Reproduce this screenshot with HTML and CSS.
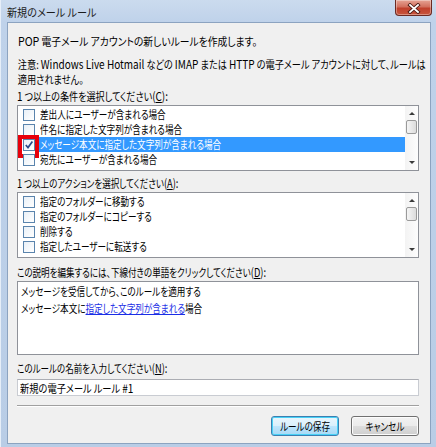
FILE: index.html
```html
<!DOCTYPE html>
<html lang="ja">
<head>
<meta charset="utf-8">
<title>新規のメール ルール</title>
<link rel="stylesheet" href="styles.css">
</head>
<body>
<div class="window">
  <div class="titlebar">
    <span class="title">新規のメール ルール</span>
    <div class="close">
      <svg width="14" height="11" viewBox="0 0 14 11"><path d="M3 2 L11 9 M11 2 L3 9" stroke="#4a1a14" stroke-width="3.6" stroke-linecap="square"/><path d="M3 2 L11 9 M11 2 L3 9" stroke="#ffffff" stroke-width="1.8" stroke-linecap="square"/></svg>
    </div>
  </div>
  <div class="client">
    <p class="intro"><span class="en">POP</span> 電子メール アカウントの新しいルールを作成します。</p>
    <p class="note">注意: <span class="en">Windows Live Hotmail</span> などの <span class="en">IMAP</span> または <span class="en">HTTP</span> の電子メール アカウントに対して、ルールは<br>適用されません。</p>

    <div class="label label-c"><span class="en">1</span> つ以上の条件を選択してください<span class="en">(<u>C</u>):</span></div>
    <div class="listbox">
      <ul class="items">
        <li><span class="cb"></span><span class="txt"><span class="c">差出人にユーザーが含まれる場合</span></span></li>
        <li><span class="cb"></span><span class="txt"><span class="c">件名に指定した文字列が含まれる場合</span></span></li>
        <li class="selected"><span class="cb checked"><svg width="10" height="10" viewBox="0 0 10 10"><path d="M1.8 5 L4 7.6 L8.4 1.6" fill="none" stroke="#2b4a8a" stroke-width="1.7"/></svg><span class="mark"></span></span><span class="txt"><span class="c">メッセージ本文に指定した文字列が含まれる場合</span></span></li>
        <li><span class="cb"></span><span class="txt"><span class="c">宛先にユーザーが含まれる場合</span></span></li>
      </ul>
      <div class="scrollbar">
        <div class="sb-btn up"></div>
        <div class="sb-thumb"></div>
        <div class="sb-track"></div>
        <div class="sb-btn down"></div>
      </div>
    </div>

    <div class="label"><span class="en">1</span> つ以上のアクションを選択してください<span class="en">(<u>A</u>):</span></div>
    <div class="listbox">
      <ul class="items">
        <li><span class="cb"></span><span class="txt"><span class="c">指定のフォルダーに移動する</span></span></li>
        <li><span class="cb"></span><span class="txt"><span class="c">指定のフォルダーにコピーする</span></span></li>
        <li><span class="cb"></span><span class="txt"><span class="c">削除する</span></span></li>
        <li><span class="cb"></span><span class="txt"><span class="c">指定したユーザーに転送する</span></span></li>
      </ul>
      <div class="scrollbar">
        <div class="sb-btn up"></div>
        <div class="sb-thumb"></div>
        <div class="sb-track"></div>
        <div class="sb-btn down"></div>
      </div>
    </div>

    <div class="label label-gap">この説明を編集するには、下線付きの単語をクリックしてください<span class="en">(<u>D</u>):</span></div>
    <div class="desc">
      <div class="desc-line">メッセージを受信してから、このルールを適用する</div>
      <div class="desc-line">メッセージ本文に<a class="link">指定した文字列が含まれる</a>場合</div>
    </div>

    <div class="label label-gap2">このルールの名前を入力してください<span class="en">(<u>N</u>):</span></div>
    <div class="input"><span class="c c-input">新規の電子メール ルール <span class="en">#1</span></span></div>

    <div class="separator"></div>

    <div class="buttons">
      <button class="btn default"><span class="c c-btn">ルールの保存</span></button>
      <button class="btn"><span class="c c-btn">キャンセル</span></button>
    </div>
  </div>
</div>
</body>
</html>
```
FILE: styles.css
```css
* { box-sizing: border-box; }
html, body { margin: 0; padding: 0; }
body {
  width: 436px;
  height: 447px;
  overflow: hidden;
  font-family: "Noto Sans CJK JP", "Noto Sans", sans-serif;
  font-size: 11px;
  line-height: 15px;
  color: #000;
  font-feature-settings: "palt";
  background: #ffffff;
}
.en { font-size: 12px; }

/* condensed text, to match the narrow kana of the original UI font */
.c {
  display: inline-block;
  white-space: nowrap;
  transform: scaleX(0.78);
  transform-origin: 0 50%;
}

.window {
  width: 436px;
  height: 447px;
  display: flex;
  flex-direction: column;
  padding: 0 5px 3px 6px;
  background: linear-gradient(180deg, #cbdbee 0px, #bfd2ea 22px, #b9cde6 100%);
  border-left: 1px solid #e6eef8;
}
.titlebar {
  height: 22px;
  display: flex;
  align-items: center;
  justify-content: space-between;
}
.title {
  color: #1b1b1b;
  line-height: 15px;
  margin-top: 2px;
  white-space: nowrap;
  transform: scaleX(0.92);
  transform-origin: 0 50%;
}
.close {
  width: 37px;
  height: 16px;
  margin-top: -6px;
  margin-right: -1px;
  border: 1px solid #6b2a22;
  border-top: none;
  border-radius: 0 0 4px 4px;
  background: linear-gradient(180deg, #e6a394 0%, #d2705e 45%, #c0402c 55%, #c7553c 100%);
  box-shadow: inset 0 0 0 1px rgba(255,255,255,0.35);
  display: flex;
  align-items: center;
  justify-content: center;
}
.close svg { display: block; margin-top: 1px; }

.client {
  flex: 1;
  background: #f0f0f0;
  border: 1px solid #8ca3c0;
  padding: 10px 11px 0 9px;
}
p { margin: 0; }
.intro {
  padding-left: 1px;
  white-space: nowrap;
  transform: scaleX(0.89);
  transform-origin: 0 50%;
}
.note {
  margin-top: 7px;
  padding-left: 1px;
  white-space: nowrap;
  transform: scaleX(0.835);
  transform-origin: 0 50%;
}
.label {
  margin-top: 1px;
  white-space: nowrap;
  transform: scaleX(0.775);
  transform-origin: 0 50%;
}
.label-c { transform: scaleX(0.825); }
.label u { text-decoration: underline; }

.listbox {
  margin-top: 1px;
  height: 66px;
  border: 1px solid #8f9299;
  background: #fff;
  display: flex;
}
.listbox + .label { margin-top: 4px; }
.items {
  list-style: none;
  margin: 0;
  padding: 1px 0 0 0;
  flex: 1;
  min-width: 0;
}
.items li {
  height: 15px;
  display: flex;
  align-items: center;
  padding-left: 5px;
  white-space: nowrap;
}
.cb {
  width: 12px;
  height: 12px;
  border: 1px solid #5a84ad;
  background: linear-gradient(135deg, #e9f0f7, #ffffff);
  margin-right: 3px;
  flex: none;
  position: relative;
}
.cb.checked svg { position: absolute; left: 0; top: 0; }
.cb .mark {
  position: absolute;
  left: -6px;
  top: -5px;
  width: 21px;
  height: 23px;
  border: 4px solid #e8000b;
}
.txt {
  padding-left: 2px;
  height: 15px;
  flex: 1;
  overflow: hidden;
}
.selected .txt {
  background: #3399ff;
  color: #fff;
}

.scrollbar {
  width: 13px;
  display: flex;
  flex-direction: column;
  background: linear-gradient(90deg, #f3f3f3, #fdfdfd);
}
.sb-btn {
  height: 14px;
  position: relative;
}
.sb-btn::after {
  content: "";
  position: absolute;
  left: 4px;
  top: 6px;
  width: 0;
  height: 0;
  border-left: 3px solid transparent;
  border-right: 3px solid transparent;
}
.sb-btn.up::after { border-bottom: 3px solid #3a3a3a; }
.sb-btn.down::after { border-top: 3px solid #3a3a3a; top: 5px; }
.sb-thumb {
  height: 14px;
  margin: 0 1px;
  border: 1px solid #9a9a9a;
  border-radius: 2px;
  background: linear-gradient(90deg, #f5f5f5, #dcdcdc);
}
.sb-track { flex: 1; }

.label-gap { margin-top: 6px !important; }
.desc {
  margin-top: 1px;
  height: 74px;
  border: 1px solid #8f9299;
  background: #fff;
  padding: 1px 3px;
  line-height: 17px;
}
.desc-line {
  white-space: nowrap;
  transform: scaleX(0.78);
  transform-origin: 0 50%;
}
.link {
  color: #1a2ee6;
  text-decoration: underline;
}
.label-gap2 { margin-top: 5px; }
.input {
  margin-top: 3px;
  height: 17px;
  border: 1px solid #c9ccd2;
  border-top-color: #abadb3;
  background: #fff;
  padding: 0 2px;
  line-height: 15px;
  white-space: nowrap;
}
.c-input { transform: scaleX(0.84); }
.separator {
  margin-top: 9px;
  height: 2px;
  border-top: 1px solid #a0a0a0;
  border-bottom: 1px solid #ffffff;
}
.buttons {
  margin-top: 9px;
  display: flex;
  justify-content: flex-end;
  gap: 12px;
}
.btn {
  width: 68px;
  height: 20px;
  padding: 0;
  font-family: inherit;
  font-size: 11px;
  line-height: 15px;
  color: #000;
  font-feature-settings: "palt";
  border: 1px solid #707070;
  border-radius: 3px;
  background: linear-gradient(180deg, #f2f2f2 0%, #ebebeb 50%, #dddddd 51%, #cfcfcf 100%);
  box-shadow: inset 0 0 0 1px #fcfcfc;
  display: flex;
  align-items: center;
  justify-content: center;
}
.c-btn { transform-origin: 50% 50%; }
.btn.default {
  border-color: #3c7fb1;
  box-shadow: inset 0 0 0 1px #48d1f6;
  background: linear-gradient(180deg, #eaf6fd 0%, #d9f0fc 50%, #bee6fd 51%, #a7d9f5 100%);
}
```
